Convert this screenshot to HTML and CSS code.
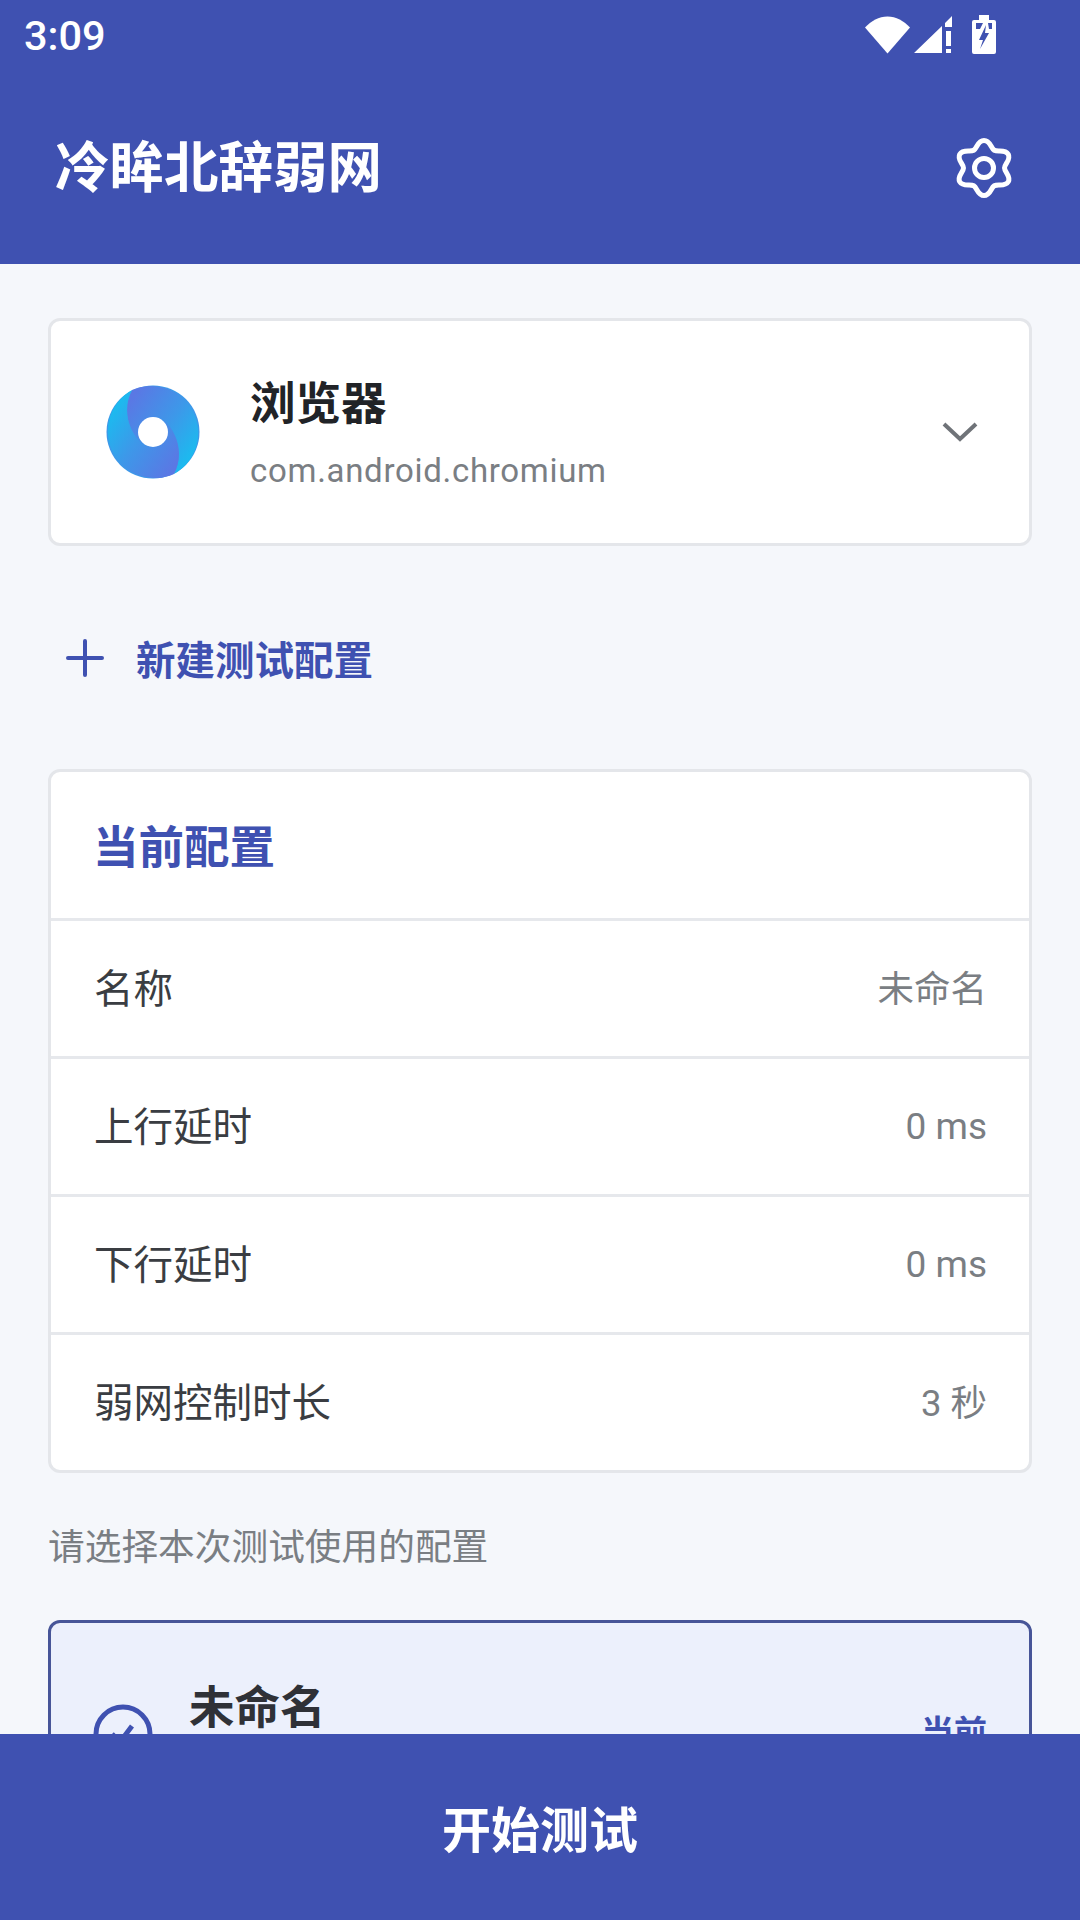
FILE: index.html
```html
<!DOCTYPE html>
<html lang="zh-CN">
<head>
<meta charset="utf-8">
<title>冷眸北辞弱网</title>
<link rel="stylesheet" href="styles.css">
</head>
<body>
<div class="screen">
  <header class="appbar">
    <div class="status">
      <span class="time">3:09</span>
      <div class="status-icons">
        <svg class="ic-wifi" width="45" height="38" viewBox="0 0 45 38"><path d="M0 11.500C6 5 14 0.500 22.500 0.500S39 5 45 11.500L22.500 37.500Z" fill="#fff"/></svg>
        <svg class="ic-signal" width="38" height="38" viewBox="0 0 38 38"><path d="M0 37L28 10V37ZM31 7L38 0V11H31ZM32 15H37V30H32ZM32 33H37V37H32Z" fill="#fff"/></svg>
        <svg class="ic-batt" width="24" height="39" viewBox="0 0 24 39"><path d="M7 0H17V5H22Q24 5 24 7V37Q24 39 22 39H2Q0 39 0 37V7Q0 5 2 5H7Z" fill="#fff"/><path d="M4 8H11L8 14H4ZM16 8H20V14H17ZM14 10L7 25H11L8 34L17 18H13Z" fill="#3f51b1"/></svg>
      </div>
    </div>
    <div class="toolbar">
      <h1 class="title">冷眸北辞弱网</h1>
      <svg class="gear" width="60" height="64" viewBox="0 0 60 64" fill="none" stroke="#fff" stroke-width="5" stroke-linejoin="round"><path d="M30 4.500C36.500 4.500 36.790 12.250 40.250 14.250C43.710 16.250 51 12.800 54.250 18.200C57.250 23.700 50.500 28 50.500 32C50.500 36 57.250 40.300 54.250 45.800C51 51.200 43.710 47.750 40.250 49.750C36.790 51.750 36.500 59.500 30 59.500C23.500 59.500 23.210 51.750 19.750 49.750C16.290 47.750 9 51.200 5.750 45.800C2.750 40.300 9.500 36 9.500 32C9.500 28 2.750 23.700 5.750 18.200C9 12.800 16.290 16.250 19.750 14.250C23.210 12.250 23.500 4.500 30 4.500Z"/><circle cx="30" cy="32" r="9.500" stroke-width="5"/></svg>
    </div>
  </header>

  <main class="content">
    <section class="card app-card">
      <svg class="app-logo" width="94" height="94" viewBox="0 0 94 94">
        <defs>
          <linearGradient id="lobe" x1="0.100" y1="0.100" x2="0.900" y2="0.800"><stop offset="0" stop-color="#5a78e4"/><stop offset=".55" stop-color="#3d98e9"/><stop offset="1" stop-color="#1cbaef"/></linearGradient>
        </defs>
        <circle cx="47" cy="47" r="46.500" fill="#3d98e9"/>
        <path d="M26 5A47 47 0 0 1 68 89C77 72 74 50 57 34L37 60C20 44 17 22 26 5Z" fill="url(#lobe)"/>
        <path d="M26 5A47 47 0 0 1 68 89C77 72 74 50 57 34L37 60C20 44 17 22 26 5Z" fill="url(#lobe)" transform="rotate(180 47 47)"/>
        <circle cx="47" cy="47" r="15" fill="#fff"/>
      </svg>
      <div class="app-text">
        <div class="app-name">浏览器</div>
        <div class="app-pkg">com.android.chromium</div>
      </div>
      <svg class="chevron" width="36" height="22" viewBox="0 0 36 22" fill="none" stroke="#6f7378" stroke-width="4"><path d="M2 3L18 18L34 3"/></svg>
    </section>

    <div class="new-config">
      <svg width="38" height="38" viewBox="0 0 38 38" fill="none" stroke="#3f51b1" stroke-width="4" stroke-linecap="round"><path d="M19 2V36M2 19H36"/></svg>
      <span>新建测试配置</span>
    </div>

    <section class="card config-card">
      <h2 class="config-title">当前配置</h2>
      <div class="row"><span class="row-label">名称</span><span class="row-value">未命名</span></div>
      <div class="row"><span class="row-label">上行延时</span><span class="row-value row-value-num">0 ms</span></div>
      <div class="row"><span class="row-label">下行延时</span><span class="row-value row-value-num">0 ms</span></div>
      <div class="row"><span class="row-label">弱网控制时长</span><span class="row-value">3 秒</span></div>
    </section>

    <p class="hint">请选择本次测试使用的配置</p>

    <section class="selected-card">
      <svg class="check" width="60" height="60" viewBox="0 0 60 60" fill="none" stroke="#3f51b1" stroke-width="5"><circle cx="30" cy="30" r="27"/><path d="M19 30L27 38L39 22"/></svg>
      <div class="selected-text">
        <div class="selected-name">未命名</div>
      </div>
      <span class="selected-tag">当前</span>
    </section>
  </main>

  <footer class="bottom-bar">开始测试</footer>
</div>
</body>
</html>
```
FILE: styles.css
```css
* { box-sizing: border-box; }
html, body { margin: 0; padding: 0; }
body {
  width: 1080px;
  height: 1920px;
  overflow: hidden;
  font-family: Roboto, "Noto Sans CJK SC", sans-serif;
  background: #f5f7fb;
}
.screen { width: 1080px; height: 1920px; display: flex; flex-direction: column; overflow: hidden; }
.appbar { height: 264px; flex: none; background: #3f51b1; color: #fff; display: flex; flex-direction: column; }
.status { height: 72px; display: flex; align-items: center; justify-content: space-between; padding: 0 84px 0 24px; }
.time { font-size: 41.500px; font-weight: 500; line-height: 72px; }
.status-icons { display: flex; align-items: flex-start; height: 72px; padding-top: 16px; }
.ic-signal { margin-left: 4px; }
.ic-batt { margin-left: 20px; margin-top: -1px; }
.toolbar { flex: 1; display: flex; align-items: center; justify-content: space-between; padding: 0 66px 0 55px; }
.title { margin: 0; font-size: 54.500px; font-weight: 700; line-height: 64px; }
.gear { flex: none; }
.content { flex: 1; min-height: 0; overflow: hidden; padding: 54px 48px 0; }
.card { background: #fff; border: 3px solid #e4e6ea; border-radius: 12px; }
.app-card { height: 228px; display: flex; align-items: center; padding: 0 51px 0 55px; }
.app-logo { flex: none; }
.app-text { flex: 1; margin-left: 50px; padding-top: 3px; }
.app-name { font-size: 45.500px; font-weight: 700; line-height: 56px; color: #212327; }
.app-pkg { font-size: 33px; line-height: 40px; margin-top: 18px; color: #7a7e83; letter-spacing: .7px; }
.new-config { display: flex; align-items: center; height: 223px; padding: 0 0 0 18px; color: #3f51b1; font-size: 39.500px; font-weight: 700; }
.new-config span { margin-left: 32px; }
.config-card { height: 704px; }
.config-title { margin: 0; height: 146px; padding-left: 42px; font-size: 45.500px; font-weight: 700; line-height: 154px; color: #3f51b1; }
.row { height: 138px; border-top: 3px solid #e6e8ec; display: flex; align-items: center; justify-content: space-between; padding: 0 42px 7px 43px; }
.row-label { font-size: 39.500px; color: #3a3d42; }
.row-value { font-size: 36.500px; color: #7a7e83; padding-top: 3px; }
.row-value-num { font-size: 37px; padding-top: 7px; }
.hint { margin: 0; height: 147px; padding-top: 50px; font-size: 36.700px; line-height: 50px; color: #7a7e83; }
.selected-card { height: 220px; background: #ecf0fc; border: 3px solid #475598; border-radius: 12px; display: flex; align-items: flex-start; padding: 0 42px; position: relative; }
.check { flex: none; margin-top: 81px; }
.selected-text { flex: 1; margin-left: 36px; }
.selected-name { font-size: 45.500px; font-weight: 700; color: #2f3137; line-height: 56px; margin-top: 58px; }
.selected-tag { font-size: 33px; font-weight: 700; color: #3f51b1; margin-top: 86px; line-height: 48px; }
.bottom-bar { height: 186px; flex: none; background: #3f51b1; color: #fff; font-size: 49px; font-weight: 700; display: flex; align-items: center; justify-content: center; padding-bottom: 2px; }
```
